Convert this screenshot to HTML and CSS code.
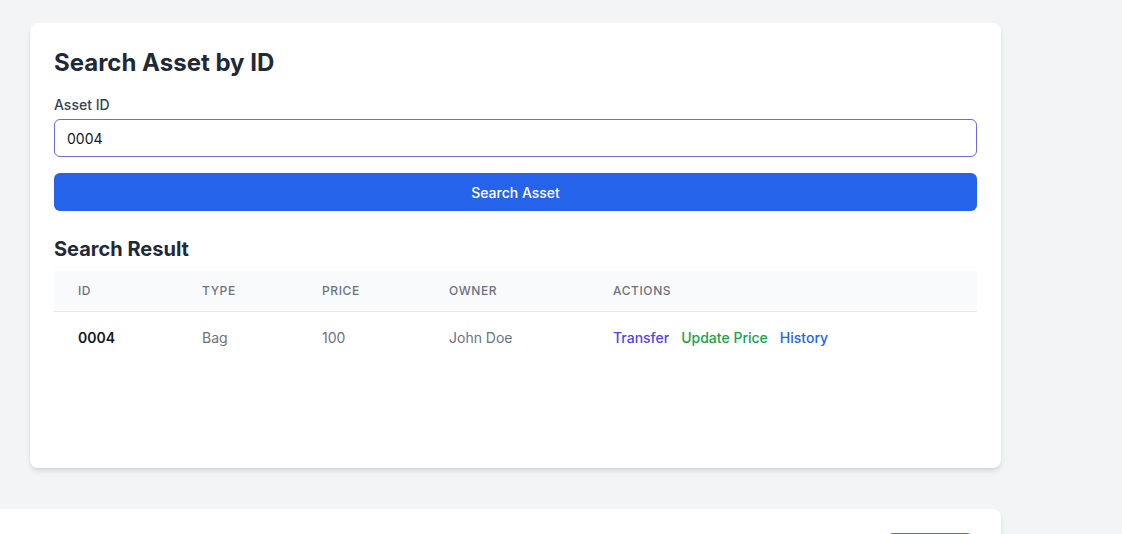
FILE: index.html
```html
<!DOCTYPE html>
<html lang="en">
<head>
<meta charset="utf-8">
<title>Search Asset</title>
<link rel="stylesheet" href="styles.css">
</head>
<body>
<main class="page">
  <section class="card">
    <h2 class="title">Search Asset by ID</h2>
    <label class="label" for="assetId">Asset ID</label>
    <input class="input" id="assetId" type="text" value="0004" autofocus>
    <button class="btn" type="button">Search Asset</button>
    <h3 class="subtitle">Search Result</h3>
    <table class="table">
      <colgroup>
        <col class="c-id"><col class="c-type"><col class="c-price"><col class="c-owner"><col>
      </colgroup>
      <thead>
        <tr><th>ID</th><th>Type</th><th>Price</th><th>Owner</th><th>Actions</th></tr>
      </thead>
      <tbody>
        <tr>
          <td class="strong">0004</td>
          <td>Bag</td>
          <td>100</td>
          <td>John Doe</td>
          <td class="actions">
            <a class="act act-transfer" href="#">Transfer</a>
            <a class="act act-update" href="#">Update Price</a>
            <a class="act act-history" href="#">History</a>
          </td>
        </tr>
      </tbody>
    </table>
  </section>
  <section class="card card-second">
    <div class="second-head">
      <span class="green-btn"></span>
    </div>
  </section>
</main>
</body>
</html>
```

FILE: styles.css
```css
* { box-sizing: border-box; }
html, body { margin: 0; padding: 0; }
body {
  background: #f3f4f6;
  font-family: Inter, "Noto Sans", "Liberation Sans", sans-serif;
  color: #1f2937;
  overflow: hidden;
}
.page {
  padding: 23px 0 0 30px;
  width: 1001px;
  display: flex;
  flex-direction: column;
  gap: 41px;
}
.card {
  background: #fff;
  border-radius: 8px;
  box-shadow: 0 4px 6px -1px rgba(0,0,0,0.1), 0 2px 4px -2px rgba(0,0,0,0.1);
  padding: 24px;
  min-height: 445px;
  display: flex;
  flex-direction: column;
}
.title {
  margin: 0;
  font-size: 24px;
  line-height: 32px;
  font-weight: 700;
  color: #1f2937;
}
.label {
  margin-top: 16px;
  font-size: 14px;
  line-height: 20px;
  font-weight: 500;
  color: #374151;
}
.input {
  margin-top: 4px;
  height: 38px;
  width: 100%;
  border: 1px solid #6f68e0;
  border-radius: 6px;
  padding: 0 12px;
  font-family: inherit;
  font-size: 14px;
  color: #111827;
  outline: none;
  caret-color: #111827;
}
.btn {
  margin-top: 16px;
  height: 38px;
  width: 100%;
  border: none;
  border-radius: 6px;
  background: #2563eb;
  color: #fff;
  font-family: inherit;
  font-size: 14px;
  font-weight: 500;
}
.subtitle {
  margin: 24px 0 8px;
  font-size: 20px;
  line-height: 28px;
  font-weight: 700;
  color: #1f2937;
}
.table {
  width: 100%;
  border-collapse: collapse;
  table-layout: fixed;
}
.c-id { width: 124px; }
.c-type { width: 120px; }
.c-price { width: 127px; }
.c-owner { width: 164px; }
.table thead tr {
  background: #f9fafb;
  border-bottom: 1px solid #e5e7eb;
}
.table th {
  text-align: left;
  padding: 0 24px;
  height: 40px;
  font-size: 12px;
  font-weight: 500;
  letter-spacing: 0.05em;
  text-transform: uppercase;
  color: #6b7280;
}
.table td {
  padding: 16px 24px;
  font-size: 14px;
  line-height: 20px;
  color: #6b7280;
  white-space: nowrap;
}
.table td.strong {
  color: #111827;
  font-weight: 600;
}
.actions { display: flex; gap: 12px; }
.act {
  text-decoration: none;
  font-weight: 500;
}
.act-transfer { color: #4f46e5; }
.act-update { color: #16a34a; }
.act-history { color: #2563eb; }
.card-second {
  margin-left: -40px;
  min-height: 120px;
  padding: 24px 28px 24px 24px;
}
.second-head {
  display: flex;
  justify-content: flex-end;
}
.green-btn {
  display: block;
  width: 86px;
  height: 36px;
  border-radius: 6px;
  background: #16a34a;
}
```
